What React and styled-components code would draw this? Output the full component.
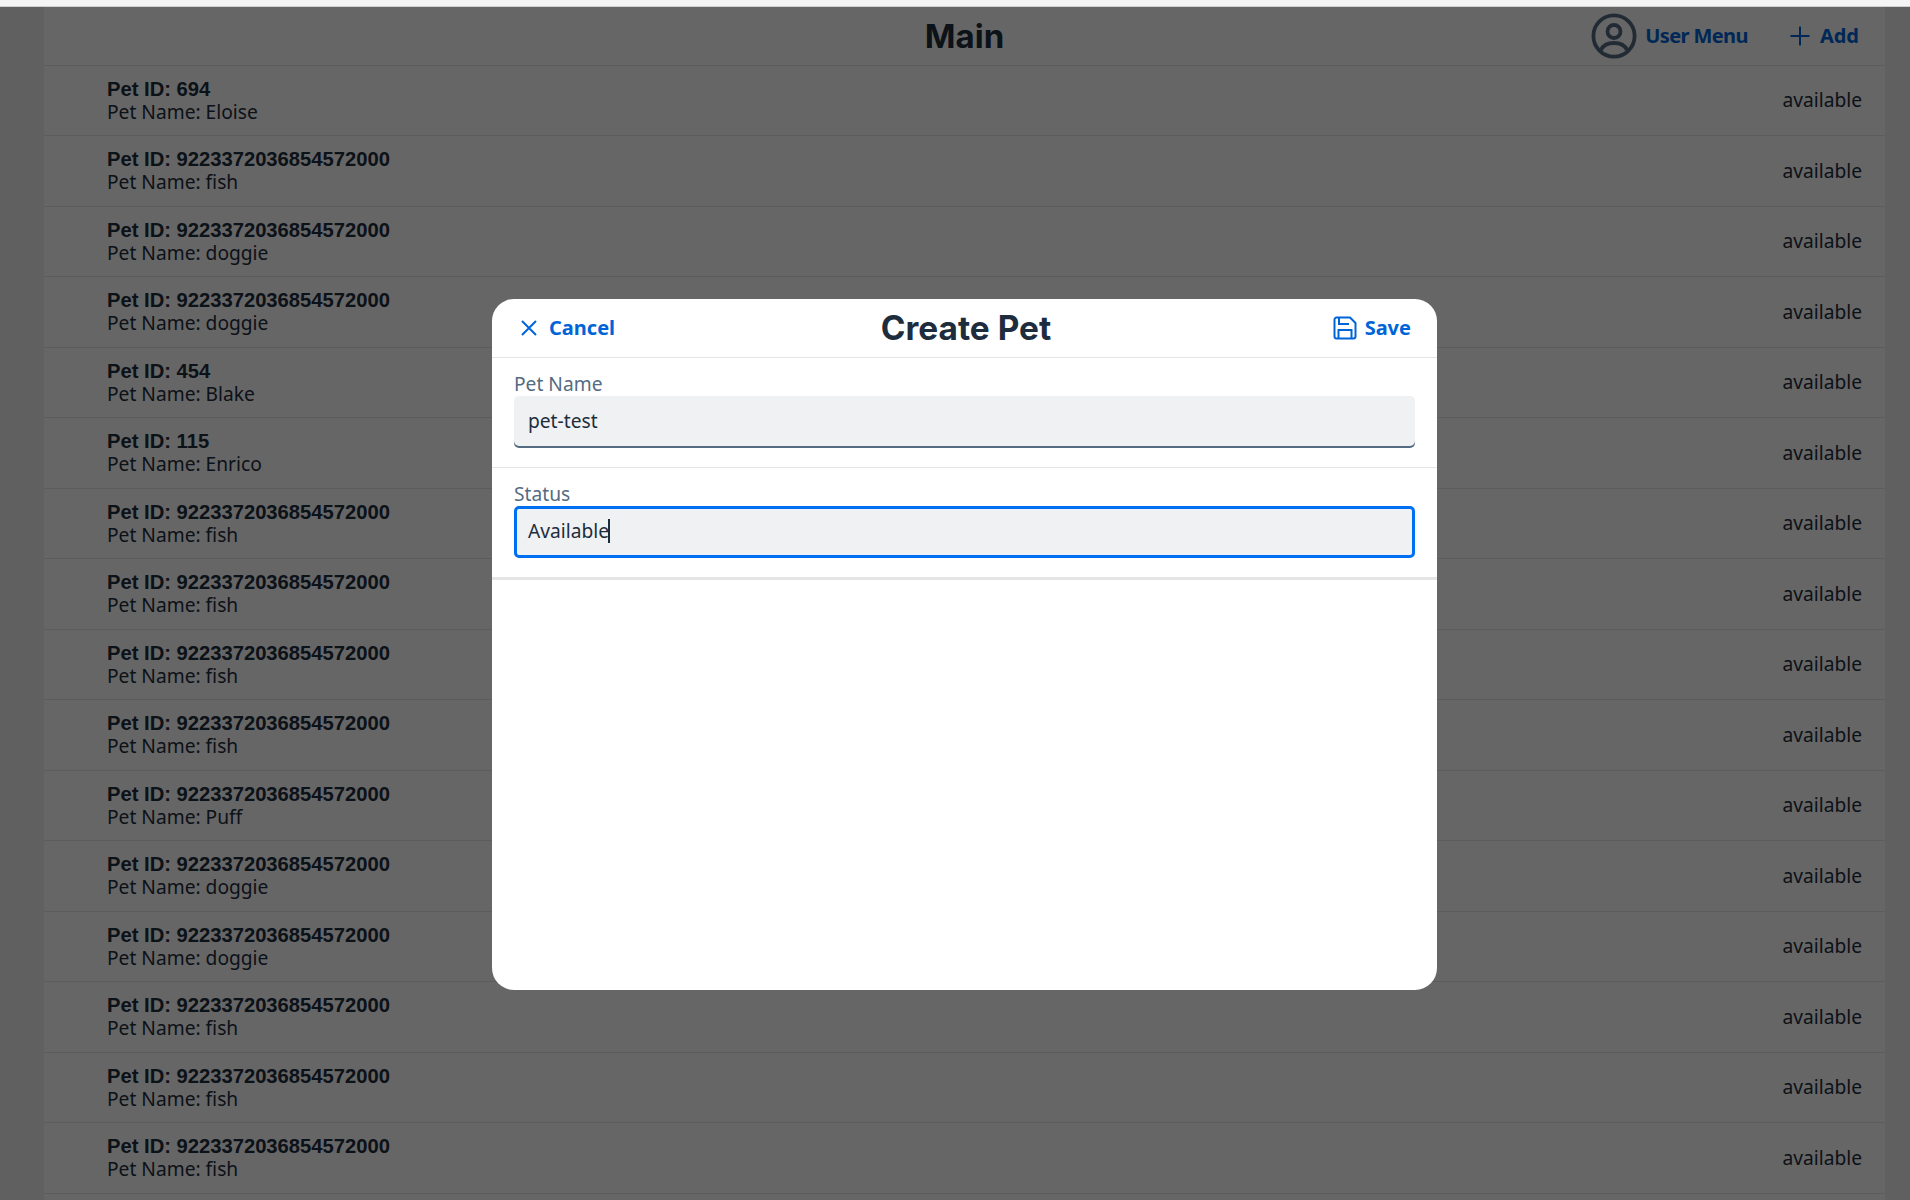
import React from 'react';
import styled, { createGlobalStyle } from 'styled-components';

const Global = createGlobalStyle`
  html, body {
    margin: 0;
    padding: 0;
    height: 100%;
    overflow: hidden;
    background: #f0f1f1;
    font-family: "Noto Sans", "Open Sans", sans-serif;
    color: #1d2d3e;
  }
  * { box-sizing: border-box; }
`;

const TopStrip = styled.div`
  height: 7px;
  background: #f4f4f4;
  border-bottom: 1px solid #cfcfcf;
  position: relative;
  z-index: 20;
`;

const Page = styled.div`
  margin: 0 25px 0 44px;
  background: #ffffff;
  height: 1193px;
  overflow: hidden;
`;

const Bar = styled.header`
  height: 58.5px;
  display: grid;
  grid-template-columns: minmax(0, 1fr) auto minmax(0, 1fr);
  align-items: center;
  border-bottom: 1px solid #e5e5e5;
`;

const BarTitle = styled.h1`
  grid-column: 2;
  margin: 2px 0 0;
  font: 700 33px/1 Inter, sans-serif;
  color: #1d2d3e;
`;

const BarActions = styled.div`
  justify-self: end;
  display: flex;
  align-items: center;
  padding-right: 26px;
`;

const Link = styled.span`
  display: flex;
  align-items: center;
  gap: ${(p) => p.$gap || 10}px;
  margin-left: ${(p) => p.$left || 0}px;
  font: 700 20px/1 "Noto Sans", sans-serif;
  letter-spacing: ${(p) => p.$spacing || 0}px;
  color: #0064d9;
`;

const Row = styled.div`
  height: 70.5px;
  display: flex;
  align-items: center;
  justify-content: space-between;
  padding: 0 23px 0 63px;
  border-bottom: 1px solid #e5e5e5;
`;

const RowId = styled.div`
  font: 700 20.2px/23px "Liberation Sans", Arial, sans-serif;
`;

const RowName = styled.div`
  font-size: 19.2px;
  line-height: 22px;
  color: #1d2d3e;
`;

const RowStatus = styled.div`
  font-size: 19.2px;
  padding-bottom: 1px;
  color: #1d2d3e;
`;

const Overlay = styled.div`
  position: fixed;
  inset: 7px 0 0 0;
  background: rgba(0, 0, 0, 0.6);
  z-index: 10;
`;

const Dialog = styled.section`
  position: absolute;
  left: 492px;
  top: 292px;
  width: 945px;
  height: 691px;
  background: #fff;
  border-radius: 22px;
  overflow: hidden;
`;

const DialogHead = styled.div`
  height: 59px;
  display: grid;
  grid-template-columns: minmax(0, 1fr) auto minmax(0, 1fr);
  align-items: center;
  padding: 0 26px 0 29px;
  border-bottom: 1.5px solid #e5e5e5;
`;

const DialogTitle = styled.h2`
  margin: 2px 0 0;
  font: 700 33.4px/1 Inter, sans-serif;
  color: #1d2d3e;
`;

const Save = styled.div`
  justify-self: end;
`;

const Section = styled.div`
  height: ${(p) => p.$h}px;
  padding: 14px 22px 0;
  border-bottom: ${(p) => p.$bw || 1.5}px solid #e5e5e5;
`;

const Label = styled.div`
  font-size: 19.2px;
  line-height: 24px;
  color: #556b82;
`;

const Field = styled.div`
  height: 52px;
  display: flex;
  align-items: center;
  padding: 0 14px 3px;
  background: #eff1f2;
  border-radius: 5px;
  font-size: 19.2px;
  color: #1d2d3e;
  ${(p) => (p.$focused
    ? 'border: 3px solid #0070f2; padding: 0 11px 3px;'
    : 'box-shadow: inset 0 -2px 0 #556b82;')}
`;

const Caret = styled.span`
  display: inline-block;
  width: 1.5px;
  height: 24px;
  margin-left: -1px;
  background: #1d2d3e;
`;

const pets = [
  ['694', 'Eloise'],
  ['9223372036854572000', 'fish'],
  ['9223372036854572000', 'doggie'],
  ['9223372036854572000', 'doggie'],
  ['454', 'Blake'],
  ['115', 'Enrico'],
  ['9223372036854572000', 'fish'],
  ['9223372036854572000', 'fish'],
  ['9223372036854572000', 'fish'],
  ['9223372036854572000', 'fish'],
  ['9223372036854572000', 'Puff'],
  ['9223372036854572000', 'doggie'],
  ['9223372036854572000', 'doggie'],
  ['9223372036854572000', 'fish'],
  ['9223372036854572000', 'fish'],
  ['9223372036854572000', 'fish'],
];

const UserIcon = () => (
  <svg width="46" height="46" viewBox="0 0 46 46" fill="none" stroke="#556b82" strokeWidth="3.8">
    <circle cx="23" cy="23" r="20.6" />
    <circle cx="23" cy="18.500" r="6.500" />
    <path d="M10 37c2-4.500 6.500-7 13-7s11 2.500 13 7" />
  </svg>
);

const PlusIcon = () => (
  <svg width="20" height="20" viewBox="0 0 20 20" stroke="#0064d9" strokeWidth="2" fill="none">
    <path d="M10 0.500v19M0.500 10h19" />
  </svg>
);

const CloseIcon = () => (
  <svg width="16" height="16" viewBox="0 0 16 16" stroke="#0064d9" strokeWidth="2" fill="none">
    <path d="M1 1l14 14M15 1L1 15" />
  </svg>
);

const SaveIcon = () => (
  <svg width="24" height="24" viewBox="0 0 24 24" stroke="#0064d9" strokeWidth="2" fill="none">
    <path d="M3.500 1.500h13.500l5.500 5.500v13.500a2 2 0 0 1-2 2h-17a2 2 0 0 1-2-2v-17a2 2 0 0 1 2-2z" />
    <path d="M6 1.500v6.500h10" />
    <path d="M5.500 22.500v-8.500h13v8.500" />
  </svg>
);

const App = () => (
  <>
    <Global />
    <TopStrip />
    <Page>
      <Bar>
        <BarTitle>Main</BarTitle>
        <BarActions>
          <Link $gap={8.5} $spacing={-0.6}><UserIcon />User Menu</Link>
          <Link $left={42}><PlusIcon />Add</Link>
        </BarActions>
      </Bar>
      {pets.map(([id, name], i) => (
        <Row key={i}>
          <div>
            <RowId>Pet ID: {id}</RowId>
            <RowName>Pet Name: {name}</RowName>
          </div>
          <RowStatus>available</RowStatus>
        </Row>
      ))}
    </Page>
    <Overlay>
      <Dialog>
        <DialogHead>
          <Link $gap={12}><CloseIcon />Cancel</Link>
          <DialogTitle>Create Pet</DialogTitle>
          <Save><Link $gap={8}><SaveIcon />Save</Link></Save>
        </DialogHead>
        <Section $h={110}>
          <Label>Pet Name</Label>
          <Field>pet-test</Field>
        </Section>
        <Section $h={111.5} $bw={3}>
          <Label>Status</Label>
          <Field $focused>Available<Caret /></Field>
        </Section>
      </Dialog>
    </Overlay>
  </>
);

export default App;
